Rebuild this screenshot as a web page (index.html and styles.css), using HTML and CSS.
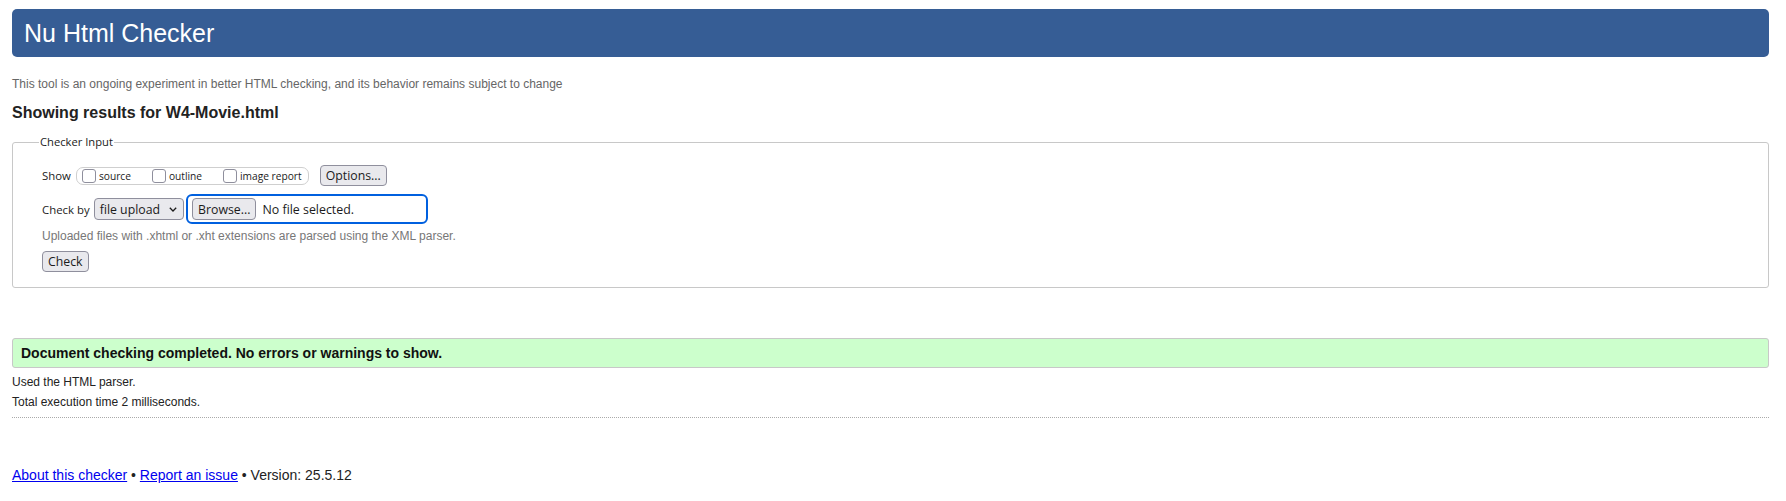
FILE: index.html
```html
<!DOCTYPE html>
<html lang="en">
<head>
<meta charset="utf-8">
<title>Showing results for W4-Movie.html - Nu Html Checker</title>
<link rel="stylesheet" href="styles.css">
</head>
<body>
<div class="page">
  <header class="banner"><h1 class="title">Nu Html Checker</h1></header>
  <p class="intro">This tool is an ongoing experiment in better HTML checking, and its behavior remains subject to change</p>
  <h2 class="results">Showing results for W4-Movie.html</h2>
  <form class="checker">
    <fieldset class="input-set">
      <legend class="legend">Checker Input</legend>
      <div class="row row-show">
        <span class="label">Show</span>
        <span class="show-box">
          <label class="opt"><input class="cb" type="checkbox">source</label>
          <label class="opt"><input class="cb" type="checkbox">outline</label>
          <label class="opt"><input class="cb" type="checkbox">image report</label>
        </span>
        <button class="btn" type="button">Options...</button>
      </div>
      <div class="row row-check">
        <span class="label">Check by</span>
        <span class="select">file upload<svg class="chev" width="8" height="5" viewBox="0 0 8 5"><polyline points="0.8,0.8 4,4 7.2,0.8" fill="none" stroke="#1b1b1b" stroke-width="1.3"/></svg></span>
        <span class="file-box"><span class="btn">Browse...</span><span class="file-name">No file selected.</span></span>
      </div>
      <p class="hint">Uploaded files with .xhtml or .xht extensions are parsed using the XML parser.</p>
      <div class="row row-submit"><button class="btn" type="button">Check</button></div>
    </fieldset>
  </form>
  <div class="status">Document checking completed. No errors or warnings to show.</div>
  <div class="details">
    <p class="detail">Used the HTML parser.</p>
    <p class="detail">Total execution time 2 milliseconds.</p>
  </div>
  <p class="footer"><a class="link" href="#">About this checker</a> • <a class="link" href="#">Report an issue</a> • Version: 25.5.12</p>
</div>
</body>
</html>
```
FILE: styles.css
```css
html, body {
  margin: 0;
  padding: 0;
  background: #fff;
}
body {
  font-family: "Liberation Sans", Arial, sans-serif;
  color: #222;
}
.page {
  padding: 9px 17px 0 12px;
}
.banner {
  height: 48px;
  background: #365d95;
  border-radius: 5px;
}
.title {
  margin: 0;
  padding-left: 12px;
  font-size: 25px;
  font-weight: normal;
  line-height: 48px;
  color: #fff;
}
.intro {
  margin: 20px 0 0;
  font-size: 12px;
  line-height: 14px;
  color: #666;
}
.results {
  margin: 12px 0 0;
  font-size: 16px;
  line-height: 19px;
  font-weight: bold;
  color: #222;
}
.checker {
  margin: 13px 0 0;
}
.input-set {
  margin: 0;
  padding: 16px 29px 15px 29px;
  border: 1px solid #c8c8c8;
  border-radius: 3px;
  min-width: 0;
}
.legend {
  margin-left: -3px;
  padding: 0 1px;
  font-family: "Open Sans", sans-serif;
  font-size: 11.2px;
  line-height: 14px;
  color: #1b1b1b;
}
.row {
  display: flex;
  align-items: center;
  font-family: "Open Sans", sans-serif;
  color: #1b1b1b;
}
.row-show {
  height: 21px;
}
.row-check {
  height: 30px;
  margin-top: 8px;
}
.label {
  font-size: 11.4px;
  margin-right: 5px;
}
.row-check .label {
  margin-right: 4px;
}
.show-box {
  display: inline-flex;
  align-items: center;
  height: 16px;
  padding: 0 6px 0 5px;
  border: 1px solid #cfcfcf;
  border-radius: 7px;
  margin-right: 11px;
}
.opt {
  display: inline-flex;
  align-items: center;
  font-size: 10.2px;
  margin-right: 21px;
}
.opt:last-child {
  margin-right: 0;
}
.cb {
  appearance: none;
  -webkit-appearance: none;
  width: 14px;
  height: 14px;
  margin: 0 3px 0 0;
  border: 1px solid #8f8f9d;
  border-radius: 3px;
  background: #fff;
  box-sizing: border-box;
}
.btn {
  display: inline-flex;
  align-items: center;
  height: 21px;
  box-sizing: border-box;
  padding: 0 5px;
  margin: 0;
  border: 1px solid #8f8f9d;
  border-radius: 4px;
  background: #e9e9ed;
  font-family: "Open Sans", sans-serif;
  font-size: 12.3px;
  color: #1b1b1b;
}
.select {
  display: inline-flex;
  align-items: center;
  height: 22px;
  box-sizing: border-box;
  padding: 0 6px 0 5px;
  border: 1px solid #8f8f9d;
  border-radius: 4px;
  background: #e9e9ed;
  font-size: 12.3px;
  margin-right: 2px;
}
.chev {
  margin-left: 9px;
}
.file-box {
  display: inline-flex;
  align-items: center;
  width: 242px;
  height: 30px;
  box-sizing: border-box;
  padding: 0 4px;
  border: 2px solid #0060df;
  border-radius: 6px;
}
.file-box .btn {
  height: 22px;
}
.file-name {
  margin-left: 6px;
  font-size: 12.4px;
}
.hint {
  margin: 5px 0 0;
  font-size: 12px;
  line-height: 14px;
  color: #777;
}
.row-submit {
  margin-top: 8px;
}
.status {
  margin-top: 50px;
  padding: 5px 8px;
  border: 1px solid #c8c8c8;
  border-radius: 3px;
  background: #ccffcc;
  font-size: 14px;
  font-weight: bold;
  line-height: 18px;
  color: #111;
}
.details {
  margin-top: 4px;
  padding-bottom: 5px;
  border-bottom: 1px dotted #aaa;
}
.detail {
  margin: 0;
  font-size: 12px;
  line-height: 20px;
  color: #222;
}
.footer {
  margin: 49px 0 0;
  font-size: 14px;
  line-height: 17px;
  color: #222;
}
.link {
  color: #0000ee;
  text-decoration: underline;
}
```
